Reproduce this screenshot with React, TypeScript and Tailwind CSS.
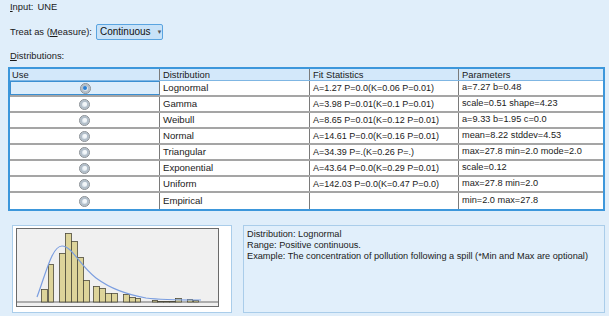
import React from "react";

type Row = {
  name: string;
  fit: string;
  params: string;
};

const rows: Row[] = [
  { name: "Lognormal", fit: "A=1.27 P=0.0(K=0.06 P=0.01)", params: "a=7.27 b=0.48" },
  { name: "Gamma", fit: "A=3.98 P=0.01(K=0.1 P=0.01)", params: "scale=0.51 shape=4.23" },
  { name: "Weibull", fit: "A=8.65 P=0.01(K=0.12 P=0.01)", params: "a=9.33 b=1.95 c=0.0" },
  { name: "Normal", fit: "A=14.61 P=0.0(K=0.16 P=0.01)", params: "mean=8.22 stddev=4.53" },
  { name: "Triangular", fit: "A=34.39 P=.(K=0.26 P=.)", params: "max=27.8 min=2.0 mode=2.0" },
  { name: "Exponential", fit: "A=43.64 P=0.0(K=0.29 P=0.01)", params: "scale=0.12" },
  { name: "Uniform", fit: "A=142.03 P=0.0(K=0.47 P=0.0)", params: "max=27.8 min=2.0" },
  { name: "Empirical", fit: "", params: "min=2.0 max=27.8" },
];

// bars in plot-local coords: [x, width, top]
const bars: [number, number, number][] = [
  [25, 6, 61], [32, 5, 36], [43, 6, 25], [49, 6, 5], [55, 6, 13], [61, 6, 29], [67, 6, 52],
  [77, 6, 58], [83, 6, 60], [89, 6, 65], [95, 6, 65], [107, 6, 66], [113, 6, 69], [119, 5, 70],
  [136, 5, 72], [141, 6, 73], [147, 6, 73], [153, 6, 73], [159, 6, 70], [171, 5, 71], [177, 5, 72],
];

const Radio = ({ checked }: { checked?: boolean }) => (
  <span className="w-[11px] h-[11px] rounded-full border border-[#8a8f94] bg-[#dfe7ee] flex items-center justify-center shadow-[inset_0_0_0_2px_#b3bfca]">
    <span className={checked ? "w-[4px] h-[4px] rounded-full bg-[#2a7fd4]" : "w-[4px] h-[4px] rounded-full bg-[#f4f7fa]"} />
  </span>
);

const Chart = () => (
  <svg width="203" height="79" viewBox="0 0 203 79" className="block">
    <rect x="0.5" y="0.5" width="202" height="78" fill="#f0f0f0" stroke="#6a6a6a" />
    <line x1="1" y1="74" x2="202" y2="74" stroke="#6a6a6a" />
    {bars.map(([x, w, t], i) => (
      <rect key={i} x={x + 0.5} y={t + 0.5} width={w} height={73.5 - t} fill="#ddd49a" stroke="#4d4a3a" strokeWidth="0.8" />
    ))}
    <path
      d="M21 69 C 30 45, 36 18, 46 18 C 56 18, 64 38, 80 50 C 95 61, 110 66, 130 70 C 145 72, 160 72, 185 72"
      fill="none"
      stroke="#7b9ee0"
      strokeWidth="1.2"
    />
  </svg>
);

export default function App() {
  return (
    <div className="w-[609px] h-[316px] overflow-hidden bg-[#e0eefa] text-[9.4px] text-[#1a1a1a] font-['Liberation_Sans',Arial,sans-serif] leading-none">
      <div className="pl-[10px] pt-[1px] h-[12px] flex items-center gap-[4px]">
        <span><span className="underline">I</span>nput:</span>
        <span>UNE</span>
      </div>

      <div className="pl-[10px] mt-[12px] flex items-center gap-[4px] h-[16px]">
        <span>Treat as (<span className="underline">M</span>easure):</span>
        <div className="w-[67px] h-[16px] rounded-[2px] border border-[#5aa4e0] bg-[#c8e2f8] flex items-center pl-[3px] gap-[6px] text-[10px] text-[#111]">
          <span>Continuous</span>
          <span className="text-[6px] text-[#555]">▼</span>
        </div>
      </div>

      <div className="pl-[10px] mt-[10px] h-[12px] flex items-center">
        <span><span className="underline">D</span>istributions:</span>
      </div>

      {/* table */}
      <div className="ml-[8px] mr-[4px] mt-[5px] border-2 border-[#3d97db] bg-white">
        <div className="flex h-[12px] bg-[#d3e8fa] border-b border-[#7fb6e3]">
          <div className="w-[150px] pl-[2px] flex items-center border-r border-[#7a7a7a]">Use</div>
          <div className="w-[150px] pl-[3px] flex items-center border-r border-[#7a7a7a]">Distribution</div>
          <div className="w-[149px] pl-[3px] flex items-center border-r border-[#7a7a7a]">Fit Statistics</div>
          <div className="flex-1 pl-[3px] flex items-center">Parameters</div>
        </div>
        {rows.map((r, i) => (
          <div
            key={r.name}
            className={i === rows.length - 1 ? "flex h-[16px]" : "flex h-[16px] border-b-2 border-[#a5a5a5]"}
          >
            <div
              className={
                i === 0
                  ? "w-[150px] flex items-center justify-center bg-[#dcedfb] border border-[#3b8fd2] border-r-[#7a7a7a]"
                  : "w-[150px] flex items-center justify-center border-r border-[#7a7a7a]"
              }
            >
              <Radio checked={i === 0} />
            </div>
            <div className="w-[150px] pl-[3px] flex items-center border-r border-[#7a7a7a] text-[9.6px]">{r.name}</div>
            <div className="w-[149px] pl-[3px] flex items-center border-r border-[#7a7a7a] text-[9px]">{r.fit}</div>
            <div className="flex-1 pl-[3px] flex items-center text-[9.2px]">{r.params}</div>
          </div>
        ))}
      </div>

      {/* bottom panels */}
      <div className="flex mt-[14px] ml-[12px] mr-[4px] gap-[11px] h-[88px]">
        <div className="w-[220px] bg-white border border-[#aacdea] pl-[3px] pt-[2px]">
          <Chart />
        </div>
        <div className="flex-1 bg-[#e1effb] border border-[#aacdea] pl-[3px] pt-[3px] flex flex-col gap-[1px] text-[9.2px] leading-[10px]">
          <span>Distribution: Lognormal</span>
          <span>Range: Positive continuous.</span>
          <span>Example: The concentration of pollution following a spill (*Min and Max are optional)</span>
        </div>
      </div>
    </div>
  );
}
